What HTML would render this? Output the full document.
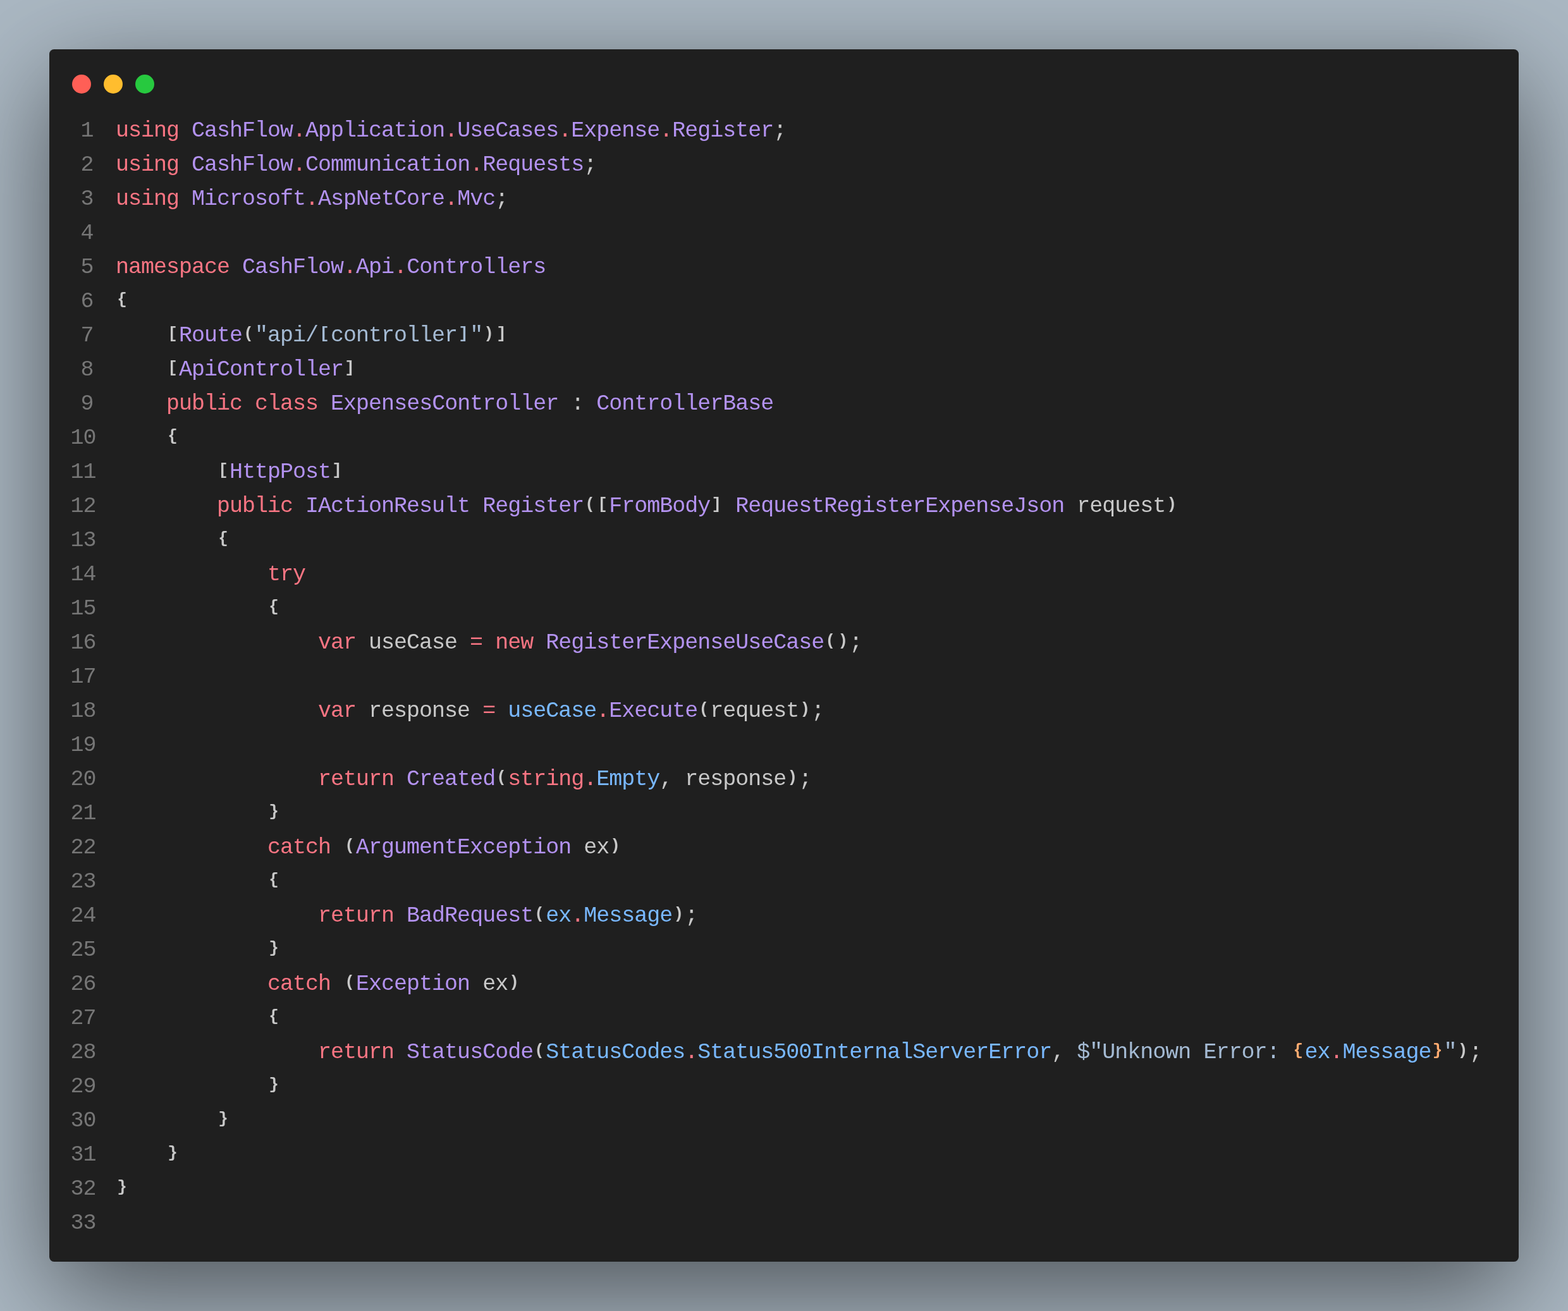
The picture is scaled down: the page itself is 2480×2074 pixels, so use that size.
<!DOCTYPE html>
<html><head><meta charset="utf-8"><title>code</title><style>
html,body{margin:0;padding:0}
body{width:2480px;height:2074px;background:#abb8c3;overflow:hidden;position:relative}
.win{position:absolute;left:78px;top:78px;width:2324px;height:1918px;background:#1f1f1f;border-radius:7.5px;box-shadow:0 50px 170px rgba(0,0,0,0.55)}
.dot{position:absolute;top:40px;width:30px;height:30px;border-radius:50%}
.r{left:36px;background:#ff5f56}.y{left:86px;background:#ffbd2e}.g{left:136px;background:#27c93f}
.code{position:absolute;left:0;will-change:transform;top:102px;font-family:"Liberation Mono", monospace;font-size:35px;letter-spacing:-1px;line-height:54px;color:#c8c8c8;font-weight:normal;-webkit-text-stroke:0}
.ln{height:54px;position:relative}
.n{position:absolute;left:-0.5px;width:70px;text-align:right;color:#767676}
.m{left:3.5px}
.c{position:absolute;left:105px;white-space:pre}
i{font-style:normal;display:inline-block;width:20px;text-align:center;letter-spacing:0;font-size:26px;font-weight:bold;vertical-align:5px;line-height:1}
.k{color:#f97583}.p{color:#b392f0}.b{color:#79b8ff}.s{color:#a4bad3}.o{color:#ffab70}
</style></head>
<body>
<div class="win">
<div class="dot r"></div><div class="dot y"></div><div class="dot g"></div>
<div class="code">
<div class="ln"><span class="n">1</span><span class="c"><span class="k">using</span> <span class="p">CashFlow</span><span class="k">.</span><span class="p">Application</span><span class="k">.</span><span class="p">UseCases</span><span class="k">.</span><span class="p">Expense</span><span class="k">.</span><span class="p">Register</span>;</span></div>
<div class="ln"><span class="n">2</span><span class="c"><span class="k">using</span> <span class="p">CashFlow</span><span class="k">.</span><span class="p">Communication</span><span class="k">.</span><span class="p">Requests</span>;</span></div>
<div class="ln"><span class="n">3</span><span class="c"><span class="k">using</span> <span class="p">Microsoft</span><span class="k">.</span><span class="p">AspNetCore</span><span class="k">.</span><span class="p">Mvc</span>;</span></div>
<div class="ln"><span class="n">4</span><span class="c"></span></div>
<div class="ln"><span class="n">5</span><span class="c"><span class="k">namespace</span> <span class="p">CashFlow</span><span class="k">.</span><span class="p">Api</span><span class="k">.</span><span class="p">Controllers</span></span></div>
<div class="ln"><span class="n">6</span><span class="c"><i>{</i></span></div>
<div class="ln"><span class="n">7</span><span class="c">    <i>[</i><span class="p">Route</span><i>(</i><span class="s">"api/<i>[</i>controller<i>]</i>"</span><i>)</i><i>]</i></span></div>
<div class="ln"><span class="n">8</span><span class="c">    <i>[</i><span class="p">ApiController</span><i>]</i></span></div>
<div class="ln"><span class="n">9</span><span class="c">    <span class="k">public</span> <span class="k">class</span> <span class="p">ExpensesController</span> : <span class="p">ControllerBase</span></span></div>
<div class="ln"><span class="n m">10</span><span class="c">    <i>{</i></span></div>
<div class="ln"><span class="n m">11</span><span class="c">        <i>[</i><span class="p">HttpPost</span><i>]</i></span></div>
<div class="ln"><span class="n m">12</span><span class="c">        <span class="k">public</span> <span class="p">IActionResult</span> <span class="p">Register</span><i>(</i><i>[</i><span class="p">FromBody</span><i>]</i> <span class="p">RequestRegisterExpenseJson</span> request<i>)</i></span></div>
<div class="ln"><span class="n m">13</span><span class="c">        <i>{</i></span></div>
<div class="ln"><span class="n m">14</span><span class="c">            <span class="k">try</span></span></div>
<div class="ln"><span class="n m">15</span><span class="c">            <i>{</i></span></div>
<div class="ln"><span class="n m">16</span><span class="c">                <span class="k">var</span> useCase <span class="k">=</span> <span class="k">new</span> <span class="p">RegisterExpenseUseCase</span><i>(</i><i>)</i>;</span></div>
<div class="ln"><span class="n m">17</span><span class="c"></span></div>
<div class="ln"><span class="n m">18</span><span class="c">                <span class="k">var</span> response <span class="k">=</span> <span class="b">useCase</span><span class="k">.</span><span class="p">Execute</span><i>(</i>request<i>)</i>;</span></div>
<div class="ln"><span class="n m">19</span><span class="c"></span></div>
<div class="ln"><span class="n m">20</span><span class="c">                <span class="k">return</span> <span class="p">Created</span><i>(</i><span class="k">string.</span><span class="b">Empty</span>, response<i>)</i>;</span></div>
<div class="ln"><span class="n m">21</span><span class="c">            <i>}</i></span></div>
<div class="ln"><span class="n m">22</span><span class="c">            <span class="k">catch</span> <i>(</i><span class="p">ArgumentException</span> ex<i>)</i></span></div>
<div class="ln"><span class="n m">23</span><span class="c">            <i>{</i></span></div>
<div class="ln"><span class="n m">24</span><span class="c">                <span class="k">return</span> <span class="p">BadRequest</span><i>(</i><span class="b">ex</span><span class="k">.</span><span class="b">Message</span><i>)</i>;</span></div>
<div class="ln"><span class="n m">25</span><span class="c">            <i>}</i></span></div>
<div class="ln"><span class="n m">26</span><span class="c">            <span class="k">catch</span> <i>(</i><span class="p">Exception</span> ex<i>)</i></span></div>
<div class="ln"><span class="n m">27</span><span class="c">            <i>{</i></span></div>
<div class="ln"><span class="n m">28</span><span class="c">                <span class="k">return</span> <span class="p">StatusCode</span><i>(</i><span class="b">StatusCodes</span><span class="k">.</span><span class="b">Status500InternalServerError</span>, <span class="s">$"Unknown Error: </span><span class="o"><i>{</i></span><span class="b">ex</span><span class="k">.</span><span class="b">Message</span><span class="o"><i>}</i></span><span class="s">"</span><i>)</i>;</span></div>
<div class="ln"><span class="n m">29</span><span class="c">            <i>}</i></span></div>
<div class="ln"><span class="n m">30</span><span class="c">        <i>}</i></span></div>
<div class="ln"><span class="n m">31</span><span class="c">    <i>}</i></span></div>
<div class="ln"><span class="n m">32</span><span class="c"><i>}</i></span></div>
<div class="ln"><span class="n m">33</span><span class="c"></span></div>
</div>
</div>
</body></html>
